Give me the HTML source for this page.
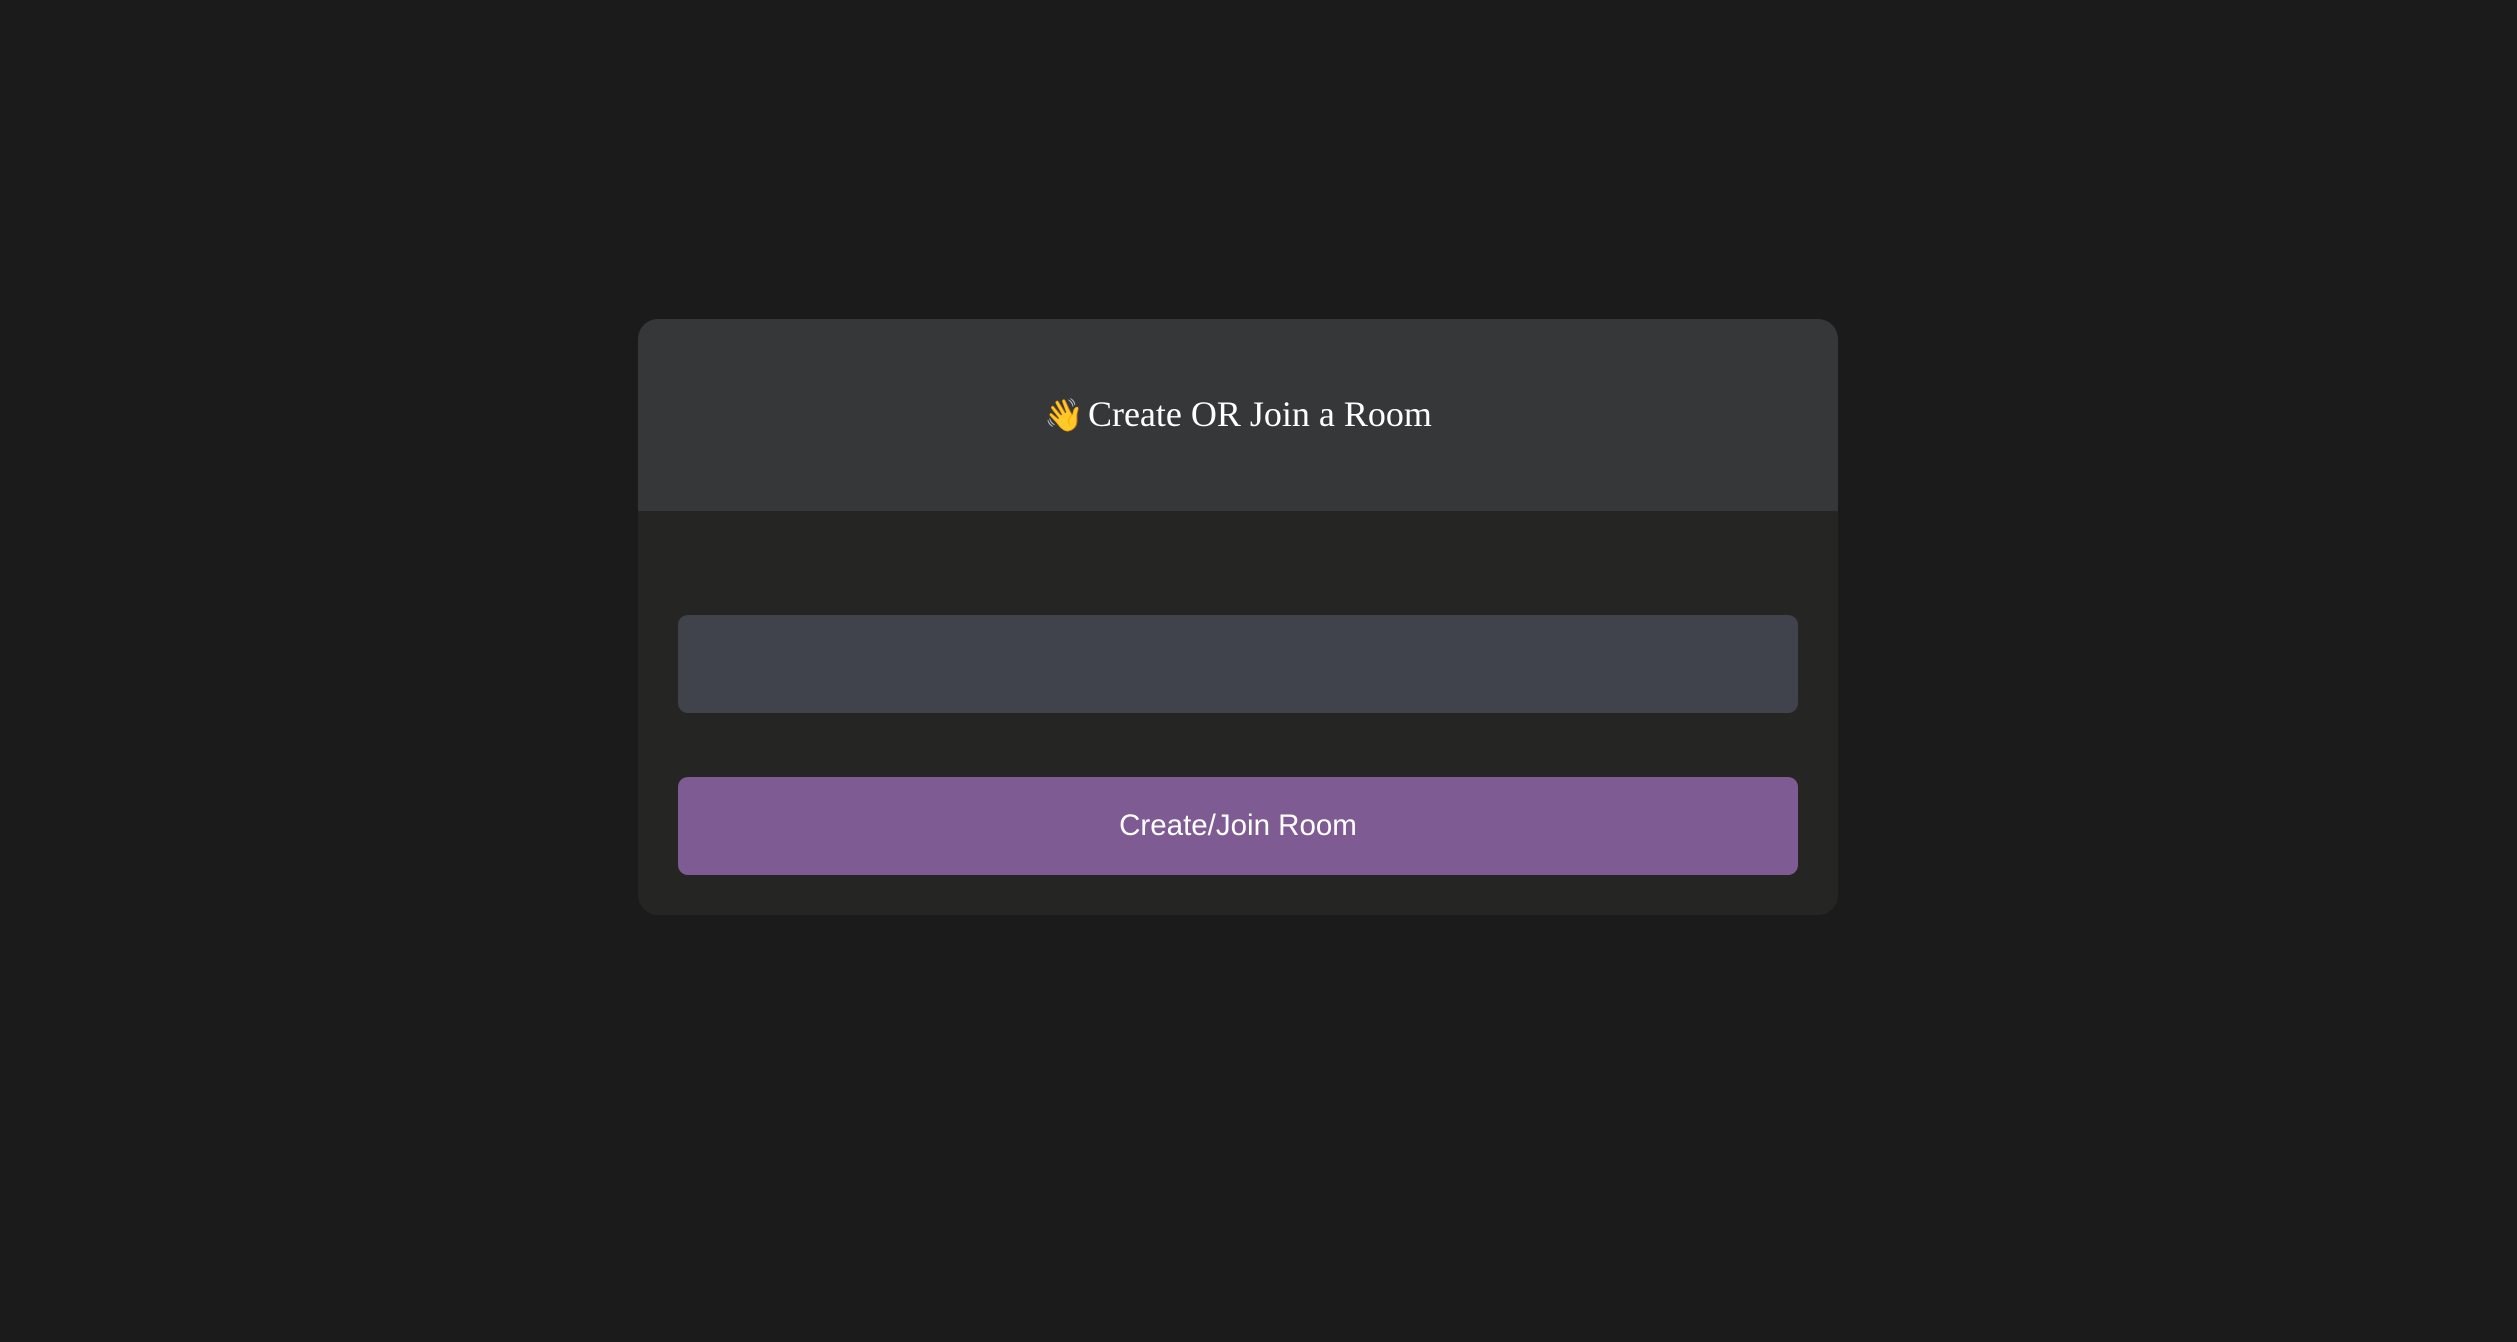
<!DOCTYPE html>
<html><head><meta charset="utf-8"><style>
html,body{margin:0;padding:0;width:2517px;height:1342px;background:#1b1b1b;overflow:hidden}
.card{position:absolute;left:638px;top:319px;width:1200px;height:596px;border-radius:20px;overflow:hidden;background:#252523}
.head{position:absolute;left:0;top:0;width:1200px;height:192px;background:#363739}
.title{position:absolute;left:0;right:0;top:69px;text-align:center;color:#fff;font-family:"Liberation Serif",serif;font-size:36px;line-height:52px}
.title span.e{font-family:"Noto Color Emoji","DejaVu Sans",sans-serif;font-size:32px;margin-right:4px}
.input{position:absolute;left:40px;top:296px;width:1120px;height:98px;background:#40434c;border-radius:10px}
.btn{position:absolute;left:40px;top:458px;width:1120px;height:98px;background:#7f5b93;border-radius:10px;color:#fff;font-family:"Liberation Sans",sans-serif;font-size:29.5px;line-height:98px;text-align:center}
</style></head><body>
<div class="card">
<div class="head"></div>
<div class="title"><span class="e">👋</span>Create OR Join a Room</div>
<div class="input"></div>
<div class="btn">Create/Join Room</div>
</div>
</body></html>
